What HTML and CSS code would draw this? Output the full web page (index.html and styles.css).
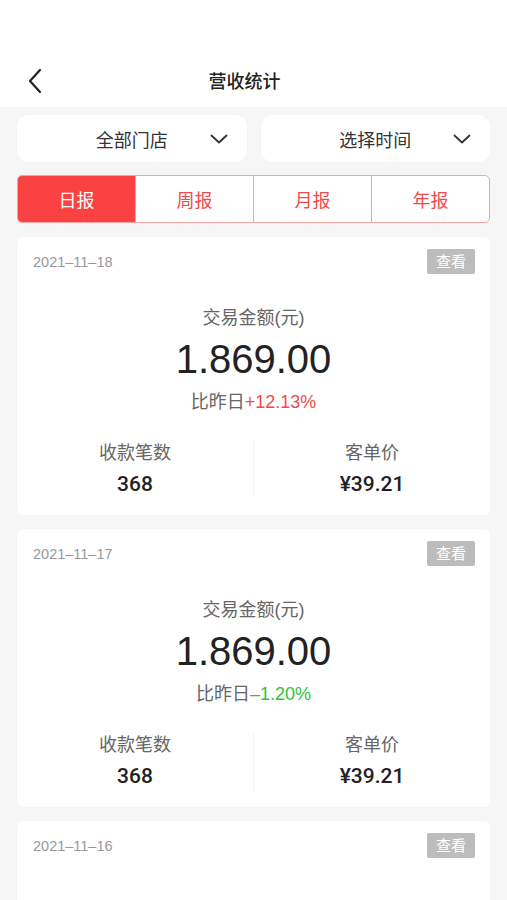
FILE: index.html
```html
<!DOCTYPE html>
<html lang="zh-CN">
<head>
<meta charset="UTF-8">
<title>营收统计</title>
<link rel="stylesheet" href="styles.css">
</head>
<body>
<div class="status-bar"></div>
<div class="nav">
    <span class="back">
        <svg width="16" height="26" viewBox="0 0 16 26"><path d="M13 2 L3 13 L13 24" fill="none" stroke="#222" stroke-width="2.2" stroke-linecap="round" stroke-linejoin="round"/></svg>
    </span>
    <span class="nav-title">营收统计</span>
    <span></span>
</div>
<div class="page">
    <div class="filters">
        <div class="select">
            <span>全部门店</span>
            <svg class="chevron" width="18" height="10" viewBox="0 0 18 10"><path d="M1.5 1.5 L9 8.5 L16.5 1.5" fill="none" stroke="#333" stroke-width="1.8" stroke-linecap="round" stroke-linejoin="round"/></svg>
        </div>
        <div class="select">
            <span>选择时间</span>
            <svg class="chevron" width="18" height="10" viewBox="0 0 18 10"><path d="M1.5 1.5 L9 8.5 L16.5 1.5" fill="none" stroke="#333" stroke-width="1.8" stroke-linecap="round" stroke-linejoin="round"/></svg>
        </div>
    </div>
    <div class="tabs">
        <div class="tab active">日报</div>
        <div class="tab">周报</div>
        <div class="tab">月报</div>
        <div class="tab">年报</div>
    </div>

    <div class="card">
        <div class="card-head">
            <span class="date">2021–11–18</span>
            <span class="view">查看</span>
        </div>
        <div class="amount-label">交易金额(元)</div>
        <div class="amount">1.869.00</div>
        <div class="compare">比昨日<span class="up">+12.13%</span></div>
        <div class="stats">
            <div class="stat">
                <div class="stat-label">收款笔数</div>
                <div class="stat-value">368</div>
            </div>
            <div class="stat">
                <div class="stat-label">客单价</div>
                <div class="stat-value">¥39.21</div>
            </div>
        </div>
    </div>

    <div class="card">
        <div class="card-head">
            <span class="date">2021–11–17</span>
            <span class="view">查看</span>
        </div>
        <div class="amount-label">交易金额(元)</div>
        <div class="amount">1.869.00</div>
        <div class="compare">比昨日<span class="down">–1.20%</span></div>
        <div class="stats">
            <div class="stat">
                <div class="stat-label">收款笔数</div>
                <div class="stat-value">368</div>
            </div>
            <div class="stat">
                <div class="stat-label">客单价</div>
                <div class="stat-value">¥39.21</div>
            </div>
        </div>
    </div>

    <div class="card card-last">
        <div class="card-head">
            <span class="date">2021–11–16</span>
            <span class="view">查看</span>
        </div>
    </div>
</div>
</body>
</html>
```

FILE: styles.css
```css
html, body {
    margin: 0;
    padding: 0;
}
* {
    box-sizing: border-box;
}
body {
    font-family: 'Liberation Sans', 'Noto Sans CJK SC', sans-serif;
    background-color: #f6f6f6;
    color: #333;
    height: 900px;
    overflow: hidden;
}
.status-bar {
    height: 52px;
    background-color: #fff;
}
.nav {
    height: 55px;
    background-color: #fff;
    display: grid;
    grid-template-columns: 60px 1fr 78px;
    align-items: center;
}
.back {
    display: flex;
    padding-left: 27px;
    margin-top: 2px;
}
.nav-title {
    text-align: center;
    font-size: 18px;
    font-weight: 500;
    color: #222;
}
.page {
    padding: 8px 17px 0;
}
.filters {
    display: flex;
    gap: 14px;
}
.select {
    flex: 1;
    height: 47px;
    background-color: #fff;
    border-radius: 12px;
    display: flex;
    align-items: center;
    justify-content: center;
    position: relative;
    font-size: 18px;
    color: #333;
}
.chevron {
    position: absolute;
    right: 19px;
    top: 19px;
}
.tabs {
    display: flex;
    margin-top: 13px;
    height: 48px;
    border: 1px solid #f6a3a3;
    border-radius: 5px;
    overflow: hidden;
    background-color: #fff;
}
.tab {
    flex: 1;
    display: flex;
    align-items: center;
    justify-content: center;
    font-size: 18px;
    color: #ef4a4a;
    border-left: 1px solid #f6a3a3;
}
.tab:first-child {
    border-left: none;
}
.tab.active {
    background-color: #fa4242;
    color: #fff;
}
.card {
    background-color: #fff;
    border-radius: 6px;
    margin-top: 14px;
    padding-bottom: 17px;
    text-align: center;
}
.card-last {
    height: 120px;
}
.card-head {
    height: 49px;
    display: flex;
    align-items: center;
    justify-content: space-between;
    padding: 0 15px 0 16px;
}
.date {
    font-size: 14.5px;
    color: #999;
}
.view {
    width: 48px;
    height: 25px;
    line-height: 25px;
    text-align: center;
    background-color: #bcbcbc;
    color: #fff;
    font-size: 15px;
    border-radius: 2px;
}
.amount-label {
    margin-top: 20px;
    font-size: 18px;
    line-height: 24px;
    color: #666;
}
.amount {
    margin-top: 7px;
    font-size: 40px;
    line-height: 44px;
    color: #222;
}
.compare {
    margin-top: 9px;
    font-size: 18px;
    line-height: 24px;
    color: #666;
}
.up {
    color: #f24a4a;
}
.down {
    color: #33c13e;
}
.stats {
    display: flex;
    margin-top: 27px;
}
.stat {
    flex: 1;
}
.stat:first-child {
    border-right: 1px solid #f3f3f3;
}
.stat-label {
    font-size: 18px;
    line-height: 24px;
    color: #666;
}
.stat-value {
    margin-top: 5px;
    font-family: Roboto, 'Liberation Sans', sans-serif;
    font-size: 21px;
    line-height: 28px;
    font-weight: 500;
    color: #222;
}
```
